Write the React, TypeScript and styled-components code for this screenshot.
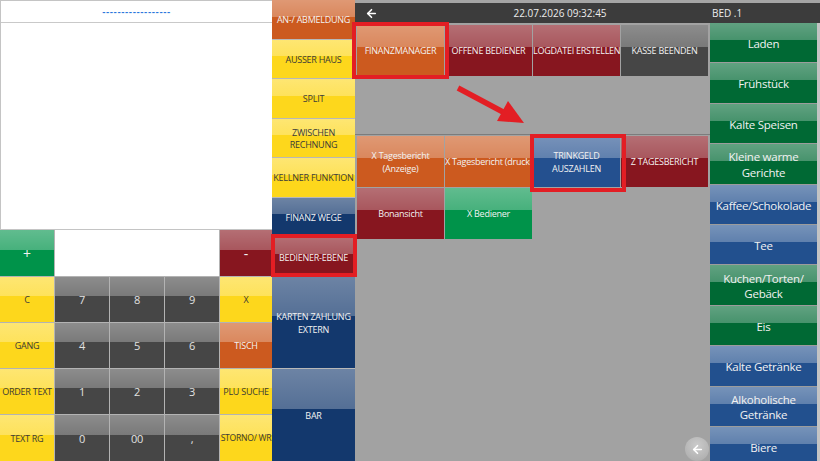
import * as React from "react";
import styled, { createGlobalStyle } from "styled-components";
import { ArrowLeft } from "lucide-react";

const GlobalStyle = createGlobalStyle`
  html, body {
    margin: 0;
    padding: 0;
    background: #a2a2a2;
  }
  body {
    font-family: "Open Sans", "Noto Sans", sans-serif;
  }
  * {
    box-sizing: border-box;
  }
`;

const C = {
  orange: "#cc5a1f",
  yellow: "#fdd71c",
  red: "#87161f",
  navy: "#13386d",
  blue: "#22508e",
  green: "#006934",
  bright: "#00934a",
  gray: "#464646",
};

const Screen = styled.div`
  position: relative;
  width: 820px;
  height: 461px;
  overflow: hidden;
  display: grid;
  grid-template-columns: 272px 83px 465px;
  background: #a2a2a2;
`;

const Tile = styled.div<{ $bg: string; $fg?: string; $size?: number }>`
  display: flex;
  align-items: center;
  padding-top: 2px;
  overflow: hidden;
  min-width: 0;
  min-height: 0;
  background-color: ${(p) => p.$bg};
  background-image: linear-gradient(
    to bottom,
    rgba(255, 255, 255, 0.38) 0%,
    rgba(255, 255, 255, 0.28) 43%,
    rgba(255, 255, 255, 0) 43%
  );
  color: ${(p) => p.$fg ?? "#f2f2f2"};
  font-size: ${(p) => p.$size ?? 9}px;
  letter-spacing: -0.25px;
  line-height: 1.35;
`;

const Label = styled.span`
  display: block;
  width: 100%;
  text-align: center;
  white-space: pre;
`;

/* left: receipt + keypad */

const LeftBlock = styled.div`
  display: grid;
  grid-template-rows: 230px 231px;
`;

const Receipt = styled.div`
  background: #fff;
  border: 1px solid #c4c4c4;
  border-right: none;
`;

const ReceiptHead = styled.div`
  height: 22px;
  border-bottom: 1px solid #c9c9c9;
  display: flex;
  align-items: center;
  justify-content: center;
  color: #2a76dc;
  font-size: 10px;
  font-weight: 600;
  letter-spacing: 0.6px;
`;

const Keypad = styled.div`
  display: grid;
  grid-template-columns: 54px 54px 54px 54px 52px;
  grid-template-rows: 46px 45px 45px 45px 46px;
  gap: 1px;
  background: #b3b3b3;
`;

const Display = styled.div`
  grid-column: 2 / 5;
  background: #fff;
`;

/* middle column */

const SideColumn = styled.div`
  display: grid;
  grid-template-rows: repeat(7, 1fr) 91px 92px;
  gap: 1px;
  background: #b8b8b8;
`;

/* right block */

const RightBlock = styled.div`
  display: grid;
  grid-template-rows: 23px 438px;
`;

const TopBar = styled.div`
  display: grid;
  grid-template-columns: 80px 250px 1fr;
  align-items: center;
  background: #3c3c3c;
  border-top: 3px solid #a5a5a5;
  color: #ececec;
  font-size: 10px;
`;

const BackCell = styled.div`
  display: flex;
  align-items: center;
  padding-left: 10px;
  color: #fff;
`;

const DateCell = styled.div`
  text-align: center;
`;

const BedCell = styled.div`
  padding-left: 27px;
`;

const Main = styled.div`
  display: grid;
  grid-template-columns: 355px 107px 3px;
  min-height: 0;
`;

const Workspace = styled.div`
  background: #a2a2a2;
  display: flex;
  flex-direction: column;
`;

const Panel = styled.div<{ $h?: number; $line?: boolean }>`
  height: ${(p) => (p.$h ? `${p.$h}px` : "auto")};
  padding: ${(p) => (p.$line ? "2px 1px 2px 2px" : "1px 1px 2px 2px")};
  border-bottom: ${(p) => (p.$line ? "1px solid #7c7c7c" : "none")};
  display: grid;
  grid-template-columns: repeat(4, 87px);
  grid-auto-rows: 51px;
  align-content: start;
  gap: 1px;
`;

const Categories = styled.div`
  display: grid;
  grid-auto-rows: 39.4px;
  gap: 1px;
  background: #9c9c9c;
  overflow: hidden;
`;

const Scrollbar = styled.div`
  background: #c4c4c4;
`;

/* overlays */

const Highlight = styled.div<{ $x: number; $y: number; $w: number; $h: number }>`
  position: absolute;
  left: ${(p) => p.$x}px;
  top: ${(p) => p.$y}px;
  width: ${(p) => p.$w}px;
  height: ${(p) => p.$h}px;
  border: 4px solid #e31e24;
  pointer-events: none;
`;

const Pointer = styled.svg`
  position: absolute;
  left: 0;
  top: 0;
  pointer-events: none;
`;

const RoundBack = styled.div`
  position: absolute;
  left: 685px;
  top: 437px;
  width: 24px;
  height: 24px;
  border-radius: 50%;
  background: radial-gradient(circle at 50% 35%, #cbcbcb 0%, #b3b3b3 70%, #a9a9a9 100%);
  display: flex;
  align-items: center;
  justify-content: center;
  color: #fff;
`;

type Key = { t: string; bg: string; fg?: string; size?: number };

const ink = "#3a3a3a";
const pale = "#e2e2e2";

const keys: Key[] = [
  { t: "+", bg: C.bright, size: 14 },
  { t: "", bg: "#fff" },
  { t: "-", bg: C.red, size: 14 },
  { t: "C", bg: C.yellow, fg: ink },
  { t: "7", bg: C.gray, fg: pale, size: 11 },
  { t: "8", bg: C.gray, fg: pale, size: 11 },
  { t: "9", bg: C.gray, fg: pale, size: 11 },
  { t: "X", bg: C.yellow, fg: ink },
  { t: "GANG", bg: C.yellow, fg: ink },
  { t: "4", bg: C.gray, fg: pale, size: 11 },
  { t: "5", bg: C.gray, fg: pale, size: 11 },
  { t: "6", bg: C.gray, fg: pale, size: 11 },
  { t: "TISCH", bg: C.orange },
  { t: "ORDER TEXT", bg: C.yellow, fg: ink },
  { t: "1", bg: C.gray, fg: pale, size: 11 },
  { t: "2", bg: C.gray, fg: pale, size: 11 },
  { t: "3", bg: C.gray, fg: pale, size: 11 },
  { t: "PLU SUCHE", bg: C.yellow, fg: ink },
  { t: "TEXT RG", bg: C.yellow, fg: ink },
  { t: "0", bg: C.gray, fg: pale, size: 11 },
  { t: "00", bg: C.gray, fg: pale, size: 11 },
  { t: ",", bg: C.gray, fg: pale, size: 11 },
  { t: "STORNO/ WR", bg: C.yellow, fg: ink, size: 8.6 },
];

const sideButtons: Key[] = [
  { t: "AN-/ ABMELDUNG", bg: C.orange },
  { t: "AUSSER HAUS", bg: C.yellow, fg: ink },
  { t: "SPLIT", bg: C.yellow, fg: ink },
  { t: "ZWISCHEN\nRECHNUNG", bg: C.yellow, fg: ink },
  { t: "KELLNER FUNKTION", bg: C.yellow, fg: ink },
  { t: "FINANZ WEGE", bg: C.navy },
  { t: "BEDIENER-EBENE", bg: C.red },
  { t: "KARTEN ZAHLUNG\nEXTERN", bg: C.navy },
  { t: "BAR", bg: C.navy },
];

const topActions: Key[] = [
  { t: "FINANZMANAGER", bg: C.orange },
  { t: "OFFENE BEDIENER", bg: C.red },
  { t: "LOGDATEI ERSTELLEN", bg: C.red },
  { t: "KASSE BEENDEN", bg: C.gray },
];

const reports: Key[] = [
  { t: "X Tagesbericht\n(Anzeige)", bg: C.orange },
  { t: "X Tagesbericht (drucken)", bg: C.orange },
  { t: "TRINKGELD\nAUSZAHLEN", bg: "#24508f" },
  { t: "Z TAGESBERICHT", bg: C.red },
  { t: "Bonansicht", bg: C.red },
  { t: "X Bediener", bg: C.bright },
];

const categories: Key[] = [
  { t: "Laden", bg: C.green },
  { t: "Frühstück", bg: C.green },
  { t: "Kalte Speisen", bg: C.green },
  { t: "Kleine warme\nGerichte", bg: C.green },
  { t: "Kaffee/Schokolade", bg: C.blue },
  { t: "Tee", bg: C.blue },
  { t: "Kuchen/Torten/\nGebäck", bg: C.green },
  { t: "Eis", bg: C.green },
  { t: "Kalte Getränke", bg: C.blue },
  { t: "Alkoholische\nGetränke", bg: C.blue },
  { t: "Biere", bg: C.blue },
];

export default function App() {
  return (
    <>
      <GlobalStyle />
      <Screen>
        <LeftBlock>
          <Receipt>
            <ReceiptHead>------------------</ReceiptHead>
          </Receipt>
          <Keypad>
            {keys.map((k, i) =>
              i === 1 ? (
                <Display key={i} />
              ) : (
                <Tile key={i} $bg={k.bg} $fg={k.fg} $size={k.size}>
                  <Label>{k.t}</Label>
                </Tile>
              )
            )}
          </Keypad>
        </LeftBlock>

        <SideColumn>
          {sideButtons.map((b) => (
            <Tile key={b.t} $bg={b.bg} $fg={b.fg}>
              <Label>{b.t}</Label>
            </Tile>
          ))}
        </SideColumn>

        <RightBlock>
          <TopBar>
            <BackCell>
              <ArrowLeft size={13} strokeWidth={3} />
            </BackCell>
            <DateCell>22.07.2026 09:32:45</DateCell>
            <BedCell>BED .1</BedCell>
          </TopBar>
          <Main>
            <Workspace>
              <Panel $h={112} $line>
                {topActions.map((b) => (
                  <Tile key={b.t} $bg={b.bg}>
                    <Label>{b.t}</Label>
                  </Tile>
                ))}
              </Panel>
              <Panel>
                {reports.map((b) => (
                  <Tile key={b.t} $bg={b.bg}>
                    <Label>{b.t}</Label>
                  </Tile>
                ))}
              </Panel>
            </Workspace>
            <Categories>
              {categories.map((c) => (
                <Tile key={c.t} $bg={c.bg} $size={11.5}>
                  <Label>{c.t}</Label>
                </Tile>
              ))}
            </Categories>
            <Scrollbar />
          </Main>
        </RightBlock>

        <Highlight $x={352} $y={22} $w={97} $h={57} />
        <Highlight $x={530} $y={134} $w={96} $h={58} />
        <Highlight $x={271} $y={234} $w={86} $h={43} />

        <Pointer width="820" height="461" viewBox="0 0 820 461">
          <line x1="458" y1="88" x2="503" y2="112" stroke="#e31e24" strokeWidth="5.5" />
          <polygon points="524,123 497,121 508,101" fill="#e31e24" />
        </Pointer>

        <RoundBack>
          <ArrowLeft size={13} strokeWidth={3} />
        </RoundBack>
      </Screen>
    </>
  );
}
